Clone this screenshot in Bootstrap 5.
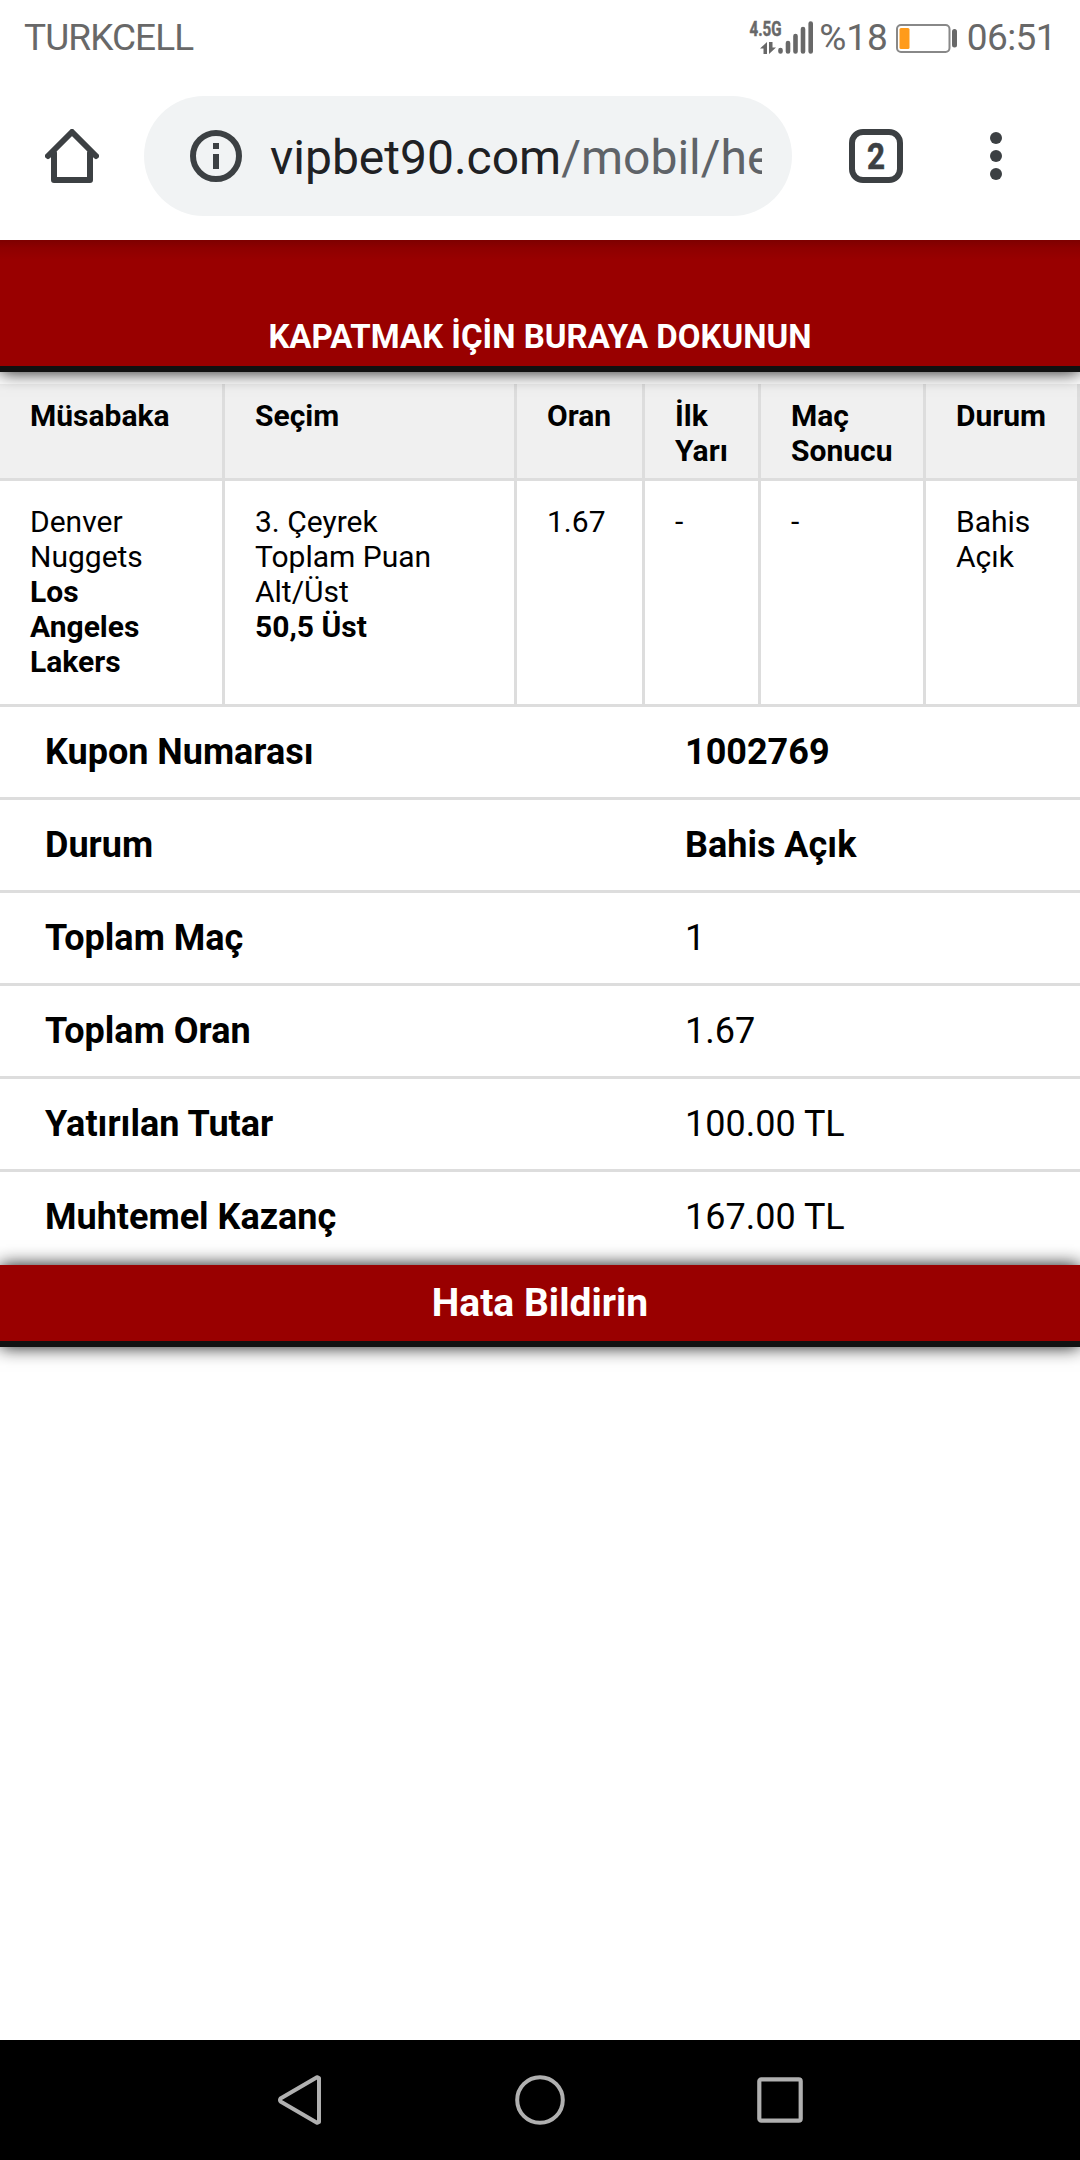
<!DOCTYPE html>
<html lang="tr">
<head>
<meta charset="utf-8">
<meta name="viewport" content="width=device-width, initial-scale=1">
<title>Kupon</title>
<link href="https://cdn.jsdelivr.net/npm/bootstrap@5.3.0/dist/css/bootstrap.min.css" rel="stylesheet">
<style>
  html, body { height: 2160px; overflow: hidden; }
  body { font-family: Roboto, "Noto Sans", sans-serif; color: #000; background: #fff; }
  svg { display: block; flex: none; }
  .status { height: 75px; padding: 0 24px 0 24px; color: #686868; font-size: 37px; line-height: 75px; }
  .status-text { white-space: nowrap; }
  .carrier { letter-spacing: -.9px; }
  .percent { margin-left: 4px; }
  .battery { margin-left: 7px; }
  .clock { letter-spacing: -.6px; }
  .toolbar { height: 165px; padding-left: 45px; padding-bottom: 3px; }
  .omnibox { width: 648px; height: 120px; margin-left: 45px; padding: 0 30px 0 46px; background: #f1f3f4; }
  .url { margin-left: 28px; padding-top: 3px; font-size: 48px; line-height: 60px; color: #202124; }
  .url-path { color: #5f6368; }
  .tabs-btn { margin-left: 57px; }
  .menu-btn { margin-left: 87px; }
  .bet-bar { background: #900; color: #fff; font-weight: 700; border-bottom: 6px solid #111; box-shadow: 0 0 17px #111; }
  .bet-head { height: 132px; padding-bottom: 10px; font-size: 33px; line-height: 38px; background: linear-gradient(#7d0000, #8e0000 8px, #900 20px); clip-path: inset(0 0 -30px 0); }
  .bet-foot { height: 82px; padding-top: 1px; font-size: 39px; line-height: 75px; }
  .view { z-index: 1; }
  .bet-table { margin: 12px 0 0; width: 1080px; table-layout: fixed; border-collapse: separate; border-spacing: 0; font-size: 30px; line-height: 35px; }
  .bet-table th, .bet-table td { border: 0 solid #ddd; border-width: 0 3px 3px 0; background: transparent; color: #000; }
  .bet-table th { height: 97px; padding: 14px 0 10px 30px; background: #f0f0f0; }
  .bet-table td { height: 226px; padding: 23px 20px 25px 30px; }
  .sum-row { height: 93px; padding-left: 45px; border-bottom: 3px solid #ddd; font-size: 36px; line-height: 90px; }
  .sum-row:last-child { border-bottom: 0; }
  .sum-label { width: 640px; font-weight: 700; }
  .navkeys { height: 120px; background: #000; padding: 0 277px; }
</style>
</head>
<body class="d-flex flex-column">
  <div class="status d-flex align-items-center flex-shrink-0">
    <span class="status-text carrier me-auto">TURKCELL</span>
    <svg width="66" height="40" viewBox="750 16 66 40" fill="#686868">
      <text x="750.5" y="34" font-family="Roboto" font-weight="700" font-size="20.5" stroke="#686868" stroke-width=".5" textLength="32" lengthAdjust="spacingAndGlyphs">4.5G</text>
      <path d="M761 46.500l7-6.500v12h-3.500v-5.500zM777 45.500l-7 6.500v-12h3.500v5.500z"/>
      <g stroke="#686868" stroke-width="4.600" stroke-linecap="round"><path d="M781.500 48v1.500M789 41v8.500M796.500 34v15.500M804 27v22.500M811.700 21.500v28"/></g>
    </svg>
    <span class="status-text percent">%18</span>
    <svg class="battery" width="64" height="32" viewBox="895 20 64 32">
      <rect x="897" y="23" width="52.500" height="27" rx="4" fill="none" stroke="#888" stroke-width="2"/>
      <rect x="899.500" y="26" width="10" height="21" rx="1.500" fill="#ff9b1a"/>
      <rect x="952" y="27" width="5" height="18.500" rx="2.500" fill="#686868"/>
    </svg>
    <span class="status-text clock ms-2">06:51</span>
  </div>

  <div class="toolbar d-flex align-items-center flex-shrink-0">
    <svg width="54" height="54" viewBox="0 0 54 54" fill="none" stroke="#3c4043" stroke-width="6" stroke-linecap="round" stroke-linejoin="round">
      <path d="M3 27L27 3l24 24M9 24v27h36V24"/>
    </svg>
    <div class="omnibox rounded-pill d-flex align-items-center">
      <svg width="52" height="52" viewBox="0 0 52 52">
        <circle cx="26" cy="26" r="23" fill="none" stroke="#3c4043" stroke-width="6"/>
        <path d="M23 13h6v6h-6zM23 24h6v15h-6z" fill="#3c4043"/>
      </svg>
      <div class="url flex-fill overflow-hidden text-nowrap"><span>vipbet90.com</span><span class="url-path">/mobil/he</span></div>
    </div>
    <svg class="tabs-btn" width="54" height="54" viewBox="0 0 54 54">
      <rect x="3" y="3" width="48" height="48" rx="11" fill="none" stroke="#3c4043" stroke-width="6"/>
      <text x="27" y="40" text-anchor="middle" font-family="Roboto" font-weight="700" font-size="36" textLength="18" lengthAdjust="spacingAndGlyphs" fill="#3c4043" stroke="#3c4043" stroke-width=".6">2</text>
    </svg>
    <svg class="menu-btn" width="12" height="48" viewBox="0 0 12 48" fill="#3c4043">
      <circle cx="6" cy="6" r="6"/><circle cx="6" cy="24" r="6"/><circle cx="6" cy="42" r="6"/>
    </svg>
  </div>

  <main class="flex-fill d-flex flex-column overflow-hidden">
    <div class="bet-bar bet-head view position-relative flex-shrink-0 d-flex align-items-end justify-content-center">KAPATMAK İÇİN BURAYA DOKUNUN</div>
    <table class="bet-table table table-borderless">
      <colgroup><col style="width:225px"><col style="width:292px"><col style="width:128px"><col style="width:116px"><col style="width:165px"><col style="width:154px"></colgroup>
      <thead><tr class="align-top"><th>Müsabaka</th><th>Seçim</th><th>Oran</th><th>İlk<br>Yarı</th><th>Maç<br>Sonucu</th><th>Durum</th></tr></thead>
      <tbody>
        <tr class="align-top">
          <td>Denver<br>Nuggets<br><b>Los<br>Angeles<br>Lakers</b></td>
          <td>3. Çeyrek<br>Toplam Puan<br>Alt/Üst<br><b>50,5 Üst</b></td>
          <td>1.67</td><td>-</td><td>-</td><td>Bahis<br>Açık</td>
        </tr>
      </tbody>
    </table>
    <div class="flex-shrink-0">
      <div class="sum-row d-flex"><div class="sum-label">Kupon Numarası</div><b>1002769</b></div>
      <div class="sum-row d-flex"><div class="sum-label">Durum</div><b>Bahis Açık</b></div>
      <div class="sum-row d-flex"><div class="sum-label">Toplam Maç</div><span>1</span></div>
      <div class="sum-row d-flex"><div class="sum-label">Toplam Oran</div><span>1.67</span></div>
      <div class="sum-row d-flex"><div class="sum-label">Yatırılan Tutar</div><span>100.00 TL</span></div>
      <div class="sum-row d-flex"><div class="sum-label">Muhtemel Kazanç</div><span>167.00 TL</span></div>
    </div>
    <div class="bet-bar bet-foot view position-relative flex-shrink-0 text-center">Hata Bildirin</div>
  </main>

  <div class="navkeys d-flex align-items-center justify-content-between flex-shrink-0">
    <svg width="46" height="50" viewBox="277 2075 46 50" fill="none" stroke="#b0b0b0" stroke-width="4" stroke-linejoin="round"><path d="M280.500 2098.500Q279.500 2100 280.500 2101.500L317 2122.800L319 2122V2078L317 2077.200Z"/></svg>
    <svg width="50" height="50" viewBox="0 0 50 50" fill="none" stroke="#b0b0b0" stroke-width="4"><circle cx="25" cy="25" r="22.800"/></svg>
    <svg width="46" height="46" viewBox="0 0 46 46" fill="none" stroke="#b0b0b0" stroke-width="4.200"><rect x="2.300" y="2.300" width="41.400" height="41.400" rx="2"/></svg>
  </div>
<script src="https://cdn.jsdelivr.net/npm/bootstrap@5.3.0/dist/js/bootstrap.bundle.min.js"></script>
</body>
</html>
